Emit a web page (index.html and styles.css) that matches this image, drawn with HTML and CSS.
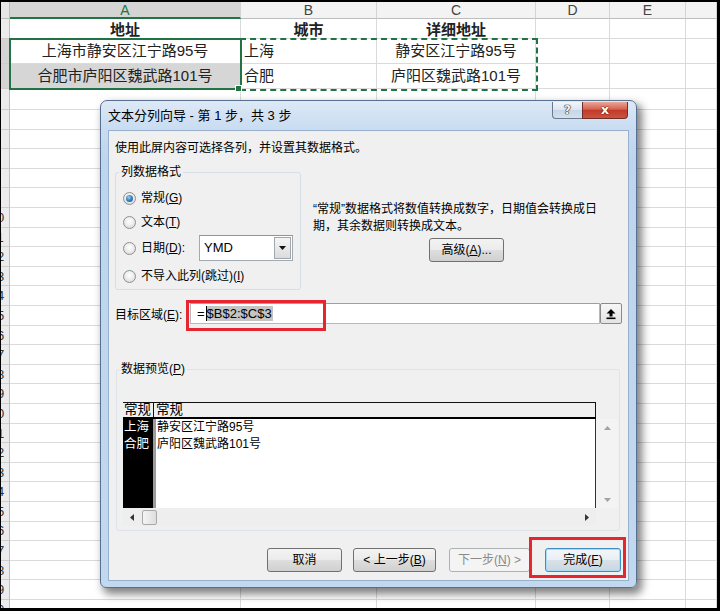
FILE: index.html
```html
<!DOCTYPE html>
<html lang="zh-CN">
<head>
<meta charset="utf-8">
<title>文本分列向导</title>
<link rel="stylesheet" href="styles.css">
</head>
<body>
<div class="page">
  <div class="sheet">
    <div class="row hdr">
      <div class="cell c0 corner"></div>
      <div class="cell ca colh sel">A</div>
      <div class="cell cb colh">B</div>
      <div class="cell cc colh">C</div>
      <div class="cell cd colh">D</div>
      <div class="cell ce colh">E</div>
      <div class="cell cf colh"></div>
    </div>
    <div class="row r1">
      <div class="cell c0 rowh"></div>
      <div class="cell ca center bold">地址</div>
      <div class="cell cb center bold">城市</div>
      <div class="cell cc center bold">详细地址</div>
      <div class="cell cd"></div>
      <div class="cell ce"></div>
      <div class="cell cf"></div>
    </div>
    <div class="row r2">
      <div class="cell c0 rowh selr"></div>
      <div class="cell ca center">上海市静安区江宁路95号</div>
      <div class="cell cb left">上海</div>
      <div class="cell cc center">静安区江宁路95号</div>
      <div class="cell cd"></div>
      <div class="cell ce"></div>
      <div class="cell cf"></div>
    </div>
    <div class="row r3">
      <div class="cell c0 rowh selr"></div>
      <div class="cell ca center grey">合肥市庐阳区魏武路101号</div>
      <div class="cell cb left">合肥</div>
      <div class="cell cc center">庐阳区魏武路101号</div>
      <div class="cell cd"></div>
      <div class="cell ce"></div>
      <div class="cell cf"></div>
    </div>
    <div class="row r4">
      <div class="cell c0 rowh"></div>
      <div class="cell ca"></div>
      <div class="cell cb"></div>
      <div class="cell cc"></div>
      <div class="cell cd"></div>
      <div class="cell ce"></div>
      <div class="cell cf"></div>
    </div>
    <div class="blank">
      <div class="bcol c0 rowh-col">
        <i></i><i></i><i></i><i></i><i></i>
        <span>10</span>
        <span>11</span><span>12</span><span>13</span><span>14</span><span>15</span><span>16</span>
        <span>17</span><span>18</span><span>19</span><span>20</span><span>21</span><span>22</span>
        <span>23</span><span>24</span><span>25</span><span>26</span><span>27</span><span>28</span>
        <span>29</span><span>30</span>
      </div>
      <div class="bcol ca"></div>
      <div class="bcol cb"></div>
      <div class="bcol cc"></div>
      <div class="bcol cd"></div>
      <div class="bcol ce"></div>
      <div class="bcol cf"></div>
    </div>
  </div>

  <div class="selection"></div>
  <div class="ants"></div>
  <div class="fill-handle"></div>

  <div class="dialog">
    <div class="titlebar">
      <span class="title">文本分列向导 - 第 1 步，共 3 步</span>
      <div class="caps">
        <span class="cap help">?</span>
        <span class="cap close">x</span>
      </div>
    </div>
    <div class="content">
      <div class="intro">使用此屏内容可选择各列，并设置其数据格式。</div>

      <div class="format-row">
        <fieldset class="fmt">
          <legend>列数据格式</legend>
          <div class="opt o1"><span class="radio on"></span><span>常规(<u>G</u>)</span></div>
          <div class="opt o2"><span class="radio"></span><span>文本(<u>T</u>)</span></div>
          <div class="opt o3"><span class="radio"></span><span class="date-lbl">日期(<u>D</u>):</span>
            <div class="select"><span class="val">YMD</span><span class="dd"><svg width="7" height="4" viewBox="0 0 7 4"><path d="M0 0H7L3.5 4Z" fill="#111"/></svg></span></div>
          </div>
          <div class="opt o4"><span class="radio"></span><span>不导入此列(跳过)(<u>I</u>)</span></div>
        </fieldset>
        <div class="desc">
          <p class="desc-text">“常规”数据格式将数值转换成数字，日期值会转换成日<br>期，其余数据则转换成文本。</p>
          <div class="btn adv">高级(<u>A</u>)...</div>
        </div>
      </div>

      <div class="target">
        <span class="target-lbl">目标区域(<u>E</u>):</span>
        <div class="input"><span class="eq">=</span><span class="hl-text">$B$2:$C$3</span></div>
        <div class="collapse"><svg width="12" height="12" viewBox="0 0 12 12"><path d="M6 1L1.5 5.5H4.5V8.5H7.5V5.5H10.5Z" fill="#000"/><rect x="1.5" y="9.5" width="9" height="1.6" fill="#000"/></svg></div>
      </div>

      <fieldset class="pgroup">
        <legend>数据预览(<u>P</u>)</legend>
        <div class="pv">
          <div class="pv-head"><span class="ph1">常规</span><span class="ph2">常规</span></div>
          <div class="pv-corner"></div>
          <div class="pv-data">
            <div class="pcol1"><div>上海</div><div>合肥</div></div>
            <div class="psep"></div>
            <div class="pcol2"><div>静安区江宁路95号</div><div>庐阳区魏武路101号</div></div>
          </div>
          <div class="vscroll">
            <span class="sarrow"><svg width="7" height="4" viewBox="0 0 7 4"><path d="M0 4L3.5 0L7 4Z" fill="#a3a3a3"/></svg></span>
            <span class="sarrow"><svg width="7" height="4" viewBox="0 0 7 4"><path d="M0 0H7L3.5 4Z" fill="#a3a3a3"/></svg></span>
          </div>
          <div class="hscroll">
            <span class="sarrow"><svg width="4" height="7" viewBox="0 0 4 7"><path d="M4 0V7L0 3.5Z" fill="#333"/></svg></span>
            <span class="thumb"></span>
            <span class="sarrow right"><svg width="4" height="7" viewBox="0 0 4 7"><path d="M0 0V7L4 3.5Z" fill="#333"/></svg></span>
          </div>
          <div class="pv-corner2"></div>
        </div>
      </fieldset>

      <div class="buttons">
        <div class="btn cancel">取消</div>
        <div class="btn back">&lt; 上一步(<u>B</u>)</div>
        <div class="btn next disabled">下一步(<u>N</u>) &gt;</div>
        <div class="mark"><div class="btn finish">完成(<u>F</u>)</div></div>
      </div>
    </div>
  </div>
</div>
</body>
</html>
```

FILE: styles.css
```css
html, body {
  margin: 0;
  background: #000;
}
body {
  width: 720px;
  height: 611px;
  overflow: hidden;
}
.page {
  position: relative;
  width: 716px;
  height: 606px;
  margin: 2px 0 0 1px;
  background: #fff;
  overflow: hidden;
  font-family: "Liberation Sans", "Noto Sans CJK SC", sans-serif;
}

/* ---------- spreadsheet ---------- */
.sheet {
  display: flex;
  flex-direction: column;
  height: 606px;
}
.row {
  display: flex;
  flex: none;
}
.cell {
  box-sizing: border-box;
  flex: none;
  display: flex;
  align-items: center;
  overflow: hidden;
  white-space: nowrap;
  border-right: 1px solid #dadada;
  border-bottom: 1px solid #dadada;
  font-size: 15px;
  line-height: 18px;
  color: #222;
}
.c0 { width: 9px; }
.ca { width: 231px; }
.cb { width: 136px; }
.cc { width: 159px; }
.cd { width: 74px; }
.ce { width: 76px; }
.cf { width: 31px; }

.hdr { height: 17px; }
.colh {
  background: #f3f3f3;
  border-right-color: #d4d4d4;
  border-bottom-color: #bdbdbd;
  justify-content: center;
  font-size: 14px;
  color: #444;
}
.colh.sel {
  background: #d4d4d4;
  color: #217346;
  border-bottom: 2px solid #217346;
}
.corner {
  background: #e6e6e6;
  border-right-color: #bdbdbd;
  border-bottom-color: #bdbdbd;
}
.r1 { height: 20px; }
.r1 .center { padding-top: 2px; }
.r2, .r3 { height: 25px; }
.r4 { height: 21px; }

.rowh {
  background: #ececec;
  border-right-color: #bdbdbd;
  border-bottom-color: #cdcdcd;
}
.rowh.selr { background: #d4d4d4; }
.center { justify-content: center; }
.left { padding-left: 3px; }
.bold { font-weight: bold; }
.grey { background: #d6d6d6; }

.blank {
  display: flex;
  flex: 1;
  min-height: 0;
}
.bcol {
  box-sizing: border-box;
  flex: none;
  border-right: 1px solid #dadada;
  background: repeating-linear-gradient(to bottom, transparent 0, transparent 18.6px, #dadada 18.6px, #dadada 19.6px);
}
.bcol.cf { flex: 1; }
.rowh-col {
  background: repeating-linear-gradient(to bottom, transparent 0, transparent 18.6px, #cdcdcd 18.6px, #cdcdcd 19.6px), #ececec;
  border-right-color: #bdbdbd;
  overflow: hidden;
  display: flex;
  flex-direction: column;
  font-size: 13px;
  color: #333;
}
.rowh-col i,
.rowh-col span {
  display: block;
  flex: none;
  height: 19.6px;
  line-height: 19.6px;
  width: 26px;
  margin-left: -17px;
  text-align: center;
}

/* selection overlays */
.selection {
  position: absolute;
  left: 8px;
  top: 36px;
  width: 233px;
  height: 52px;
  box-sizing: border-box;
  border: 2px solid #217346;
}
.ants {
  position: absolute;
  left: 239px;
  top: 36px;
  width: 298px;
  height: 53px;
  box-sizing: border-box;
  border: 2px dashed #217346;
}
.fill-handle {
  position: absolute;
  left: 234px;
  top: 83px;
  width: 5px;
  height: 5px;
  background: #217346;
  border: 1px solid #fff;
}

/* ---------- dialog ---------- */
.dialog {
  position: absolute;
  left: 99px;
  top: 98px;
  width: 537px;
  height: 488px;
  box-sizing: border-box;
  border: 1px solid #58708f;
  border-radius: 7px 7px 6px 6px;
  background: linear-gradient(to bottom, #dde9f6 0, #c9dcf1 28px, #bdd5ee 60px, #c2d8ef 100%);
  box-shadow: 4px 5px 9px 1px rgba(0, 0, 0, 0.5);
  padding: 0 7px 6px;
  display: flex;
  flex-direction: column;
  font-size: 12px;
  color: #000;
}
.titlebar {
  height: 29px;
  flex: none;
  display: flex;
  align-items: center;
}
.title {
  font-size: 13px;
  line-height: 16px;
  padding-top: 1px;
}
.caps {
  margin-left: auto;
  align-self: flex-start;
  margin-top: 1px;
  margin-right: 1px;
  display: flex;
}
.cap {
  box-sizing: border-box;
  height: 17px;
  display: flex;
  align-items: center;
  justify-content: center;
  font-weight: bold;
  font-family: "DejaVu Sans", sans-serif;
}
.help {
  width: 30px;
  border: 1px solid #6b7b8f;
  border-right: none;
  border-top: none;
  border-radius: 0 0 0 4px;
  background: linear-gradient(to bottom, #f1f5fa 0%, #dbe5f0 50%, #c7d5e6 51%, #d5e0ee 100%);
  font-size: 12px;
  color: #eef2f7;
  text-shadow: 0 0 1px #222, 0 0 1px #222, 0 0 1px #222;
}
.close {
  width: 46px;
  border: 1px solid #6e3028;
  border-top: none;
  border-radius: 0 0 4px 0;
  background: linear-gradient(to bottom, #e8a797 0%, #d8624f 45%, #c23a2a 52%, #cc5340 100%);
  font-size: 13px;
  color: #fff;
  text-shadow: 0 0 1px #4a1208, 0 0 1px #4a1208, 0 0 1px #4a1208;
  padding-bottom: 2px;
}

.content {
  flex: 1;
  border: 1px solid #98b0cb;
  background: #f0f0f0;
  padding: 0 0 0 6px;
  display: flex;
  flex-direction: column;
}
.intro {
  margin-top: 9px;
  line-height: 17px;
  height: 17px;
}

.format-row {
  display: flex;
  margin-top: 8px;
}
fieldset {
  margin: 0;
  min-width: 0;
  box-sizing: border-box;
  border: 1px solid #d5dfe5;
  border-radius: 3px;
}
legend {
  font-size: 12px;
  line-height: 14px;
  padding: 0 2px;
}
.fmt {
  width: 186px;
  padding: 9px 0 3px 7px;
}
.fmt legend { margin-left: -4px; }
.opt {
  display: flex;
  align-items: center;
  height: 20px;
  line-height: 16px;
}
.o2 { margin-top: 4px; }
.o3 { margin-top: 3px; height: 26px; }
.o4 { margin-top: 5px; }
.radio {
  flex: none;
  box-sizing: border-box;
  width: 13px;
  height: 13px;
  border-radius: 50%;
  border: 1px solid #8e8f8f;
  background: radial-gradient(circle at 50% 40%, #fefefe 0, #f0f0f0 40%, #d2d2d2 100%);
  margin-right: 5px;
  display: flex;
  align-items: center;
  justify-content: center;
}
.radio.on::after {
  content: "";
  width: 7px;
  height: 7px;
  border-radius: 50%;
  background: radial-gradient(circle at 40% 35%, #9ad1f5 0, #3c86c2 45%, #164e80 100%);
}
.date-lbl {
  width: 58px;
  flex: none;
}
.select {
  display: flex;
  box-sizing: border-box;
  width: 94px;
  height: 26px;
  border: 1px solid #a3a9b0;
  border-top-color: #8f959c;
  background: #fff;
}
.select .val {
  flex: 1;
  padding-left: 4px;
  font-size: 13px;
  line-height: 24px;
}
.select .dd {
  box-sizing: border-box;
  width: 17px;
  margin: 1px;
  border: 1px solid #a0a7ae;
  background: linear-gradient(to bottom, #f5f5f5, #dcdcdc);
  display: flex;
  align-items: center;
  justify-content: center;
}

.desc {
  margin-left: 12px;
  padding-top: 36px;
}
.desc-text {
  margin: 0;
  line-height: 17px;
}
.btn {
  box-sizing: border-box;
  height: 24px;
  flex: none;
  display: flex;
  align-items: center;
  justify-content: center;
  border: 1px solid #707070;
  border-radius: 3px;
  background: linear-gradient(to bottom, #f3f3f3 0%, #ebebeb 50%, #dedede 51%, #d0d0d0 100%);
  font-size: 12px;
  line-height: 14px;
  white-space: nowrap;
}
.adv {
  width: 75px;
  margin-top: 3px;
  margin-left: 116px;
}

.target {
  display: flex;
  align-items: center;
  margin-top: 13px;
  height: 21px;
}
.target-lbl {
  width: 75px;
  flex: none;
}
.input {
  position: relative;
  box-sizing: border-box;
  width: 410px;
  height: 21px;
  border: 1px solid #b5b9bf;
  border-top-color: #9ba0a6;
  background: #fff;
  display: flex;
  align-items: center;
  padding-left: 6px;
  font-size: 13px;
}
.input::after {
  content: "";
  position: absolute;
  left: -5px;
  top: -4px;
  width: 140px;
  height: 31px;
  box-sizing: border-box;
  border: 3px solid #e5262e;
}
.eq { padding-right: 1px; }
.hl-text {
  background: #c4c4c4;
  border-left: 1px solid #000;
  line-height: 15px;
  padding-right: 1px;
}
.collapse {
  box-sizing: border-box;
  width: 22px;
  height: 21px;
  border: 1px solid #8a8a8a;
  border-radius: 2px;
  background: linear-gradient(to bottom, #f7f7f7, #e3e3e3);
  display: flex;
  align-items: center;
  justify-content: center;
}

.pgroup {
  margin-top: 38px;
  margin-left: 1px;
  width: 504px;
  padding: 26px 1px 4px 6px;
  border-color: #dde3e8;
}
.pgroup legend { margin-left: -4px; }
.pv {
  display: grid;
  grid-template-columns: 473px 22px;
  grid-template-rows: 17px 89px 18px;
}
.pv-head {
  box-sizing: border-box;
  display: flex;
  border-top: 1px solid #111;
  border-bottom: 2px solid #000;
  border-right: 1px solid #111;
  background: #f0f0f0;
  font-size: 13.5px;
  line-height: 14px;
}
.ph1 {
  box-sizing: border-box;
  width: 31px;
  padding-left: 1px;
  border-right: 1px solid #111;
  overflow: hidden;
  white-space: nowrap;
}
.ph2 { padding-left: 2px; }
.pv-data {
  box-sizing: border-box;
  display: flex;
  background: #fff;
  border-right: 1px solid #333;
  font-size: 12.5px;
  line-height: 17px;
}
.pcol1 {
  width: 30px;
  background: #000;
  color: #fff;
  padding-left: 1px;
  box-sizing: border-box;
  white-space: nowrap;
  overflow: hidden;
}
.psep {
  width: 3px;
  background: #9c9c9c;
}
.pcol2 {
  padding-left: 1px;
  font-size: 12px;
  white-space: nowrap;
}
.vscroll {
  background: #f3f3f3;
  display: flex;
  flex-direction: column;
  justify-content: space-between;
}
.vscroll .sarrow {
  height: 17px;
  display: flex;
  align-items: center;
  justify-content: center;
}
.hscroll {
  background: #eeeeee;
  display: flex;
  align-items: center;
}
.hscroll .sarrow {
  width: 17px;
  height: 18px;
  display: flex;
  align-items: center;
  justify-content: center;
}
.hscroll .sarrow.right { margin-left: auto; margin-right: 1px; }
.thumb {
  box-sizing: border-box;
  width: 15px;
  height: 15px;
  margin-left: 2px;
  border: 1px solid #a9a9a9;
  border-radius: 2px;
  background: linear-gradient(to right, #f5f5f5, #dedede);
}
.pv-corner, .pv-corner2 { background: transparent; }

.buttons {
  display: flex;
  justify-content: flex-end;
  align-items: flex-start;
  margin-top: 6px;
  padding-right: 2px;
}
.buttons > .btn { margin-top: 11px; }
.cancel { width: 75px; margin-right: 11px; }
.back { width: 83px; margin-right: 13px; }
.next { width: 81px; margin-right: -1px; }
.mark {
  flex: none;
  box-sizing: border-box;
  width: 97px;
  height: 41px;
  border: 3px solid #e5262e;
  padding: 8px 0 0 13px;
}
.finish {
  width: 76px;
  border-color: #3c8ec4;
  box-shadow: inset 0 0 0 1px #a8dcf5;
  background: linear-gradient(to bottom, #f3f7fa 0%, #e8eef3 50%, #d8e1e8 51%, #cbd6de 100%);
}
.disabled {
  border-color: #adb2b5;
  background: #f4f4f4;
  color: #8a8a8a;
}
```
